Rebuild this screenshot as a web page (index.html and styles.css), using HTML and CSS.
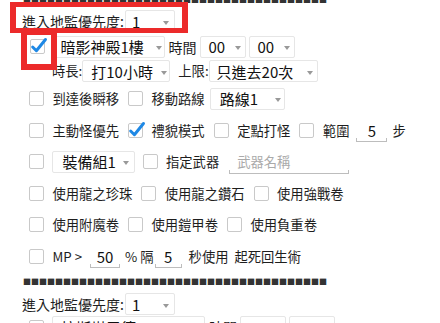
FILE: index.html
```html
<!DOCTYPE html>
<html lang="zh-Hant">
<head>
    <meta charset="UTF-8">
    <meta name="viewport" content="width=device-width, initial-scale=1.0">
    <title>地監設定</title>
    <link rel="stylesheet" href="styles.css">
</head>
<body>
    <div class="page">
        <div class="sep sep-top">■■■■■■■■■■■■■■■■■■■■■■■■■■■■■■■■■■■■■■</div>

        <div class="row prio">
            <span class="lbl lbl-lg">進入地監優先度:</span>
            <span class="sel sel-prio"><span>1</span><i class="arr"></i></span>
        </div>

        <div class="row r2">
            <span class="cb on"><svg viewBox="0 0 15 15"><path d="M2.5 7.5 L6 11 L14.5 0.5"/></svg></span>
            <span class="sel sel-map"><span>暗影神殿1樓</span><i class="arr"></i></span>
            <span class="lbl lbl-time">時間</span>
            <span class="sel sel-t"><span>00</span><i class="arr"></i></span>
            <span class="sel sel-t"><span>00</span><i class="arr"></i></span>
        </div>

        <div class="row r3">
            <span class="lbl">時長:</span>
            <span class="sel sel-dur"><span>打10小時</span><i class="arr"></i></span>
            <span class="lbl lbl-limit">上限:</span>
            <span class="sel sel-lim"><span>只進去20次</span><i class="arr"></i></span>
        </div>

        <div class="row rs">
            <span class="cb"></span>
            <span class="lbl">到達後瞬移</span>
            <span class="cb"></span>
            <span class="lbl">移動路線</span>
            <span class="sel sel-route"><span>路線1</span><i class="arr"></i></span>
        </div>

        <div class="row rs">
            <span class="cb"></span>
            <span class="lbl">主動怪優先</span>
            <span class="cb on"><svg viewBox="0 0 15 15"><path d="M2.5 7.5 L6 11 L14.5 0.5"/></svg></span>
            <span class="lbl">禮貌模式</span>
            <span class="cb"></span>
            <span class="lbl">定點打怪</span>
            <span class="cb"></span>
            <span class="lbl">範圍</span>
            <span class="inp inp-range">5</span>
            <span class="lbl lbl-step">步</span>
        </div>

        <div class="row rs">
            <span class="cb"></span>
            <span class="sel sel-eq"><span>裝備組1</span><i class="arr"></i></span>
            <span class="cb cb-after-sel"></span>
            <span class="lbl">指定武器</span>
            <span class="inp inp-weapon"><span class="ph">武器名稱</span></span>
        </div>

        <div class="row rs">
            <span class="cb"></span>
            <span class="lbl">使用龍之珍珠</span>
            <span class="cb"></span>
            <span class="lbl">使用龍之鑽石</span>
            <span class="cb"></span>
            <span class="lbl">使用強戰卷</span>
        </div>

        <div class="row rs">
            <span class="cb"></span>
            <span class="lbl">使用附魔卷</span>
            <span class="cb"></span>
            <span class="lbl">使用鎧甲卷</span>
            <span class="cb"></span>
            <span class="lbl">使用負重卷</span>
        </div>

        <div class="row rs">
            <span class="cb"></span>
            <span class="lbl">MP &gt;</span>
            <span class="inp inp-mp">50</span>
            <span class="lbl lbl-every">% 隔</span>
            <span class="inp inp-sec">5</span>
            <span class="lbl lbl-use">秒使用 起死回生術</span>
        </div>

        <div class="sep sep-mid">■■■■■■■■■■■■■■■■■■■■■■■■■■■■■■■■■■■■■■</div>

        <div class="row prio prio2">
            <span class="lbl lbl-lg">進入地監優先度:</span>
            <span class="sel sel-prio"><span>1</span><i class="arr"></i></span>
        </div>

        <div class="row rlast">
            <span class="cb"></span>
            <span class="sel sel-map2"><span>拉斯塔巴德</span><i class="arr"></i></span>
            <span class="lbl lbl-time">時間</span>
            <span class="sel sel-t"><span>00</span><i class="arr"></i></span>
            <span class="sel sel-t"><span>00</span><i class="arr"></i></span>
        </div>
    </div>

    <!-- 紅框標註 -->
    <div class="mark mark-a"></div>
    <div class="mark mark-b"></div>
</body>
</html>
```

FILE: styles.css
```css
* {
    box-sizing: border-box;
}

body {
    margin: 0;
    background: #fff;
    color: #1e1e1e;
    font-family: "Noto Sans CJK TC", "Noto Sans", sans-serif;
    overflow: hidden;
}

.page {
    width: 440px;
}

.row {
    display: flex;
    align-items: center;
    padding-left: 29px;
    white-space: nowrap;
}

.lbl {
    font-size: 13.3px;
    line-height: 1;
    margin-right: 9px;
    flex: none;
}

.lbl-lg {
    font-size: 14px;
    margin-right: 0;
}

/* separators */
.sep {
    padding-left: 23px;
    font-size: 8px;
    color: #333;
    white-space: nowrap;
    overflow: hidden;
}

.sep-top {
    height: 16px;
    line-height: 16px;
    margin-top: -8px;
}

.sep-mid {
    height: 20px;
    line-height: 20px;
}

/* rows */
.prio {
    height: 26px;
    padding-left: 22px;
}

.prio2 {
    height: 24px;
}

.r2 {
    height: 25px;
    padding-left: 30px;
}

.r3 {
    height: 24px;
    padding-left: 52px;
}

.rs {
    height: 31.5px;
}

.rlast {
    height: 22px;
}

/* checkbox */
.cb {
    position: relative;
    flex: none;
    width: 15px;
    height: 15px;
    border: 1px solid #c9c9c9;
    border-radius: 2px;
    margin-right: 8.5px;
    background: #fff;
}

.cb svg {
    position: absolute;
    left: -1px;
    top: -1px;
    width: 16px;
    height: 16px;
    overflow: visible;
}

.cb svg path {
    fill: none;
    stroke: #1e88e5;
    stroke-width: 2.8;
    stroke-linecap: round;
    stroke-linejoin: round;
}

.cb-after-sel {
    margin-left: 8px;
}

/* spinner */
.sel {
    display: flex;
    flex: none;
    align-items: center;
    justify-content: space-between;
    height: 22px;
    border: 1px solid #e6e6e6;
    border-radius: 2px;
    font-size: 15px;
    color: #111;
    padding: 0 4px 0 8px;
}

.arr {
    width: 0;
    height: 0;
    margin-top: 3px;
    border-left: 3.5px solid transparent;
    border-right: 3.5px solid transparent;
    border-top: 4px solid #999;
}

.sel-prio {
    width: 50px;
    margin-left: 1px;
    padding-left: 6px;
    padding-right: 5px;
}

.sel-map {
    width: 110px;
    margin-left: 1px;
    padding-left: 5px;
    padding-right: 2px;
}

.sel-map2 {
    width: 153px;
    margin-left: -0.5px;
}

.lbl-time {
    font-size: 14px;
    margin: 0 3px 0 4px;
}

.sel-t {
    width: 46px;
    margin-right: 3px;
}

.sel-dur {
    width: 88px;
    margin-left: -9px;
    padding-right: 2px;
}

.lbl-limit {
    margin-left: 8px;
    margin-right: 0;
}

.sel-lim {
    width: 109px;
    padding-left: 7px;
}

.sel-route {
    width: 75px;
    margin-left: -4px;
    padding-left: 9px;
    padding-right: 3px;
}

.sel-eq {
    width: 83px;
    margin-left: -1px;
    padding-left: 10px;
    padding-right: 5px;
}

/* edit text with holo underline */
.inp {
    position: relative;
    display: flex;
    flex: none;
    align-items: center;
    justify-content: center;
    height: 24px;
    font-size: 15px;
    color: #111;
    margin-right: 5px;
}

.inp::after {
    content: "";
    position: absolute;
    left: 0;
    right: 0;
    bottom: 0;
    height: 3px;
    border: 1px solid #bdbdbd;
    border-top: none;
}

.inp-range {
    width: 31px;
    margin-left: -2px;
}

.lbl-step {
    margin-left: 0;
}

.inp-weapon {
    width: 120px;
    margin-left: 1px;
    justify-content: flex-start;
    padding-left: 8px;
}

.ph {
    font-size: 13.3px;
    color: #aaa;
}

.inp-mp {
    width: 30px;
    margin-left: -1px;
}

.inp-sec {
    width: 27px;
    margin-left: -4px;
    margin-right: 7px;
}

.lbl-every {
    margin-right: 5px;
}

.lbl-use {
    word-spacing: 3px;
}

/* annotation boxes */
.mark {
    position: absolute;
    border: 6px solid #ec2a2a;
}

.mark-a {
    left: 10px;
    top: 2px;
    width: 178px;
    height: 31px;
    border-width: 5px 6px 5px 6px;
}

.mark-b {
    left: 21px;
    top: 29px;
    width: 36px;
    height: 41px;
}
```
